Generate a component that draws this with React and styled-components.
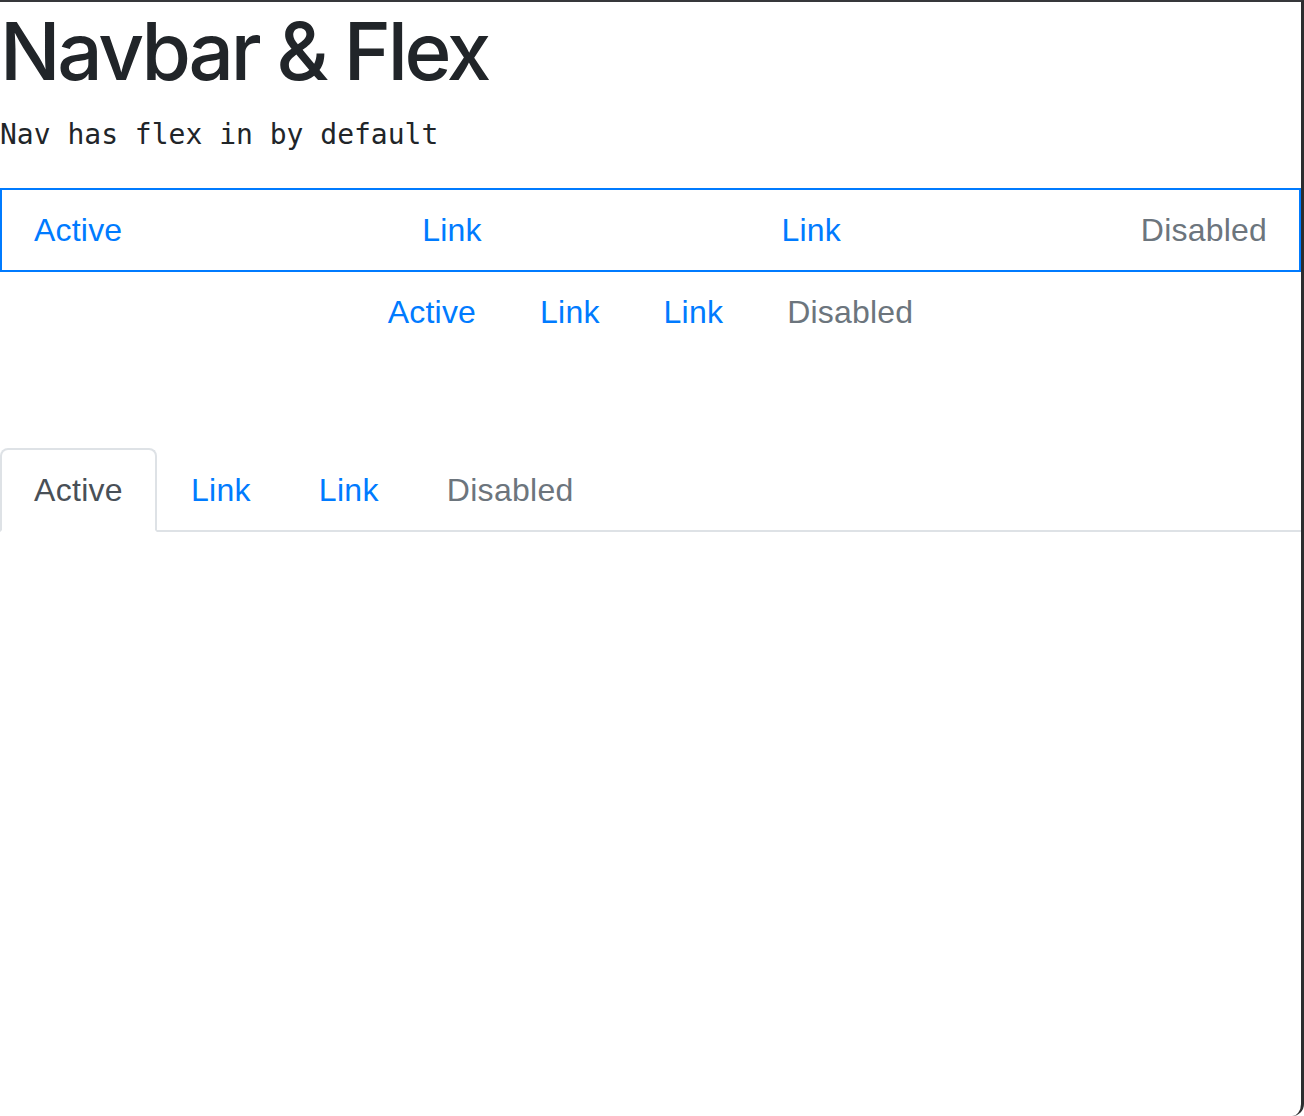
import React from 'react';
import styled, { createGlobalStyle, css } from 'styled-components';

const GlobalStyle = createGlobalStyle`
  html, body {
    margin: 0;
    padding: 0;
    background: #ffffff;
  }
  body {
    font-family: "Liberation Sans", Arial, sans-serif;
    color: #212529;
  }
  * {
    box-sizing: border-box;
  }
`;

const Window = styled.div`
  width: 1304px;
  min-height: 1116px;
  border-top: 2px solid #36383b;
  border-right: 3px solid #2c2d2f;
  border-bottom-right-radius: 12px;
  background: #ffffff;
  overflow: hidden;
`;

const Title = styled.h1`
  margin: 0 0 16px;
  padding-top: 2px;
  font-family: Inter, "Liberation Sans", sans-serif;
  font-size: 80px;
  line-height: 94px;
  font-weight: 500;
  letter-spacing: -3.2px;
  color: #212529;
`;

const Note = styled.p`
  margin: 0 0 32px;
  font-family: "DejaVu Sans Mono", "Liberation Mono", monospace;
  font-size: 28px;
  line-height: 42px;
  color: #212529;
`;

const Nav = styled.nav`
  display: flex;
  flex-wrap: wrap;
  justify-content: ${(p) => p.$justify || 'flex-start'};
  ${(p) =>
    p.$outlined &&
    css`
      border: 2px solid #007bff;
    `}
`;

const NavLink = styled.a`
  display: block;
  padding: 16px 32px;
  font-size: 32px;
  line-height: 48px;
  letter-spacing: 0.2px;
  text-decoration: none;
  color: ${(p) => (p.$disabled ? '#6c757d' : '#007bff')};
  cursor: ${(p) => (p.$disabled ? 'default' : 'pointer')};
`;

const Tabs = styled.nav`
  display: flex;
  margin-top: 96px;
  border-bottom: 2px solid #dee2e6;
`;

const Tab = styled.a`
  display: block;
  margin-bottom: -2px;
  padding: 16px 32px;
  font-size: 32px;
  line-height: 48px;
  letter-spacing: 0.3px;
  text-decoration: none;
  border: 2px solid transparent;
  border-top-left-radius: 8px;
  border-top-right-radius: 8px;
  color: ${(p) => (p.$active ? '#495057' : p.$disabled ? '#6c757d' : '#007bff')};
  ${(p) =>
    p.$active &&
    css`
      background: #ffffff;
      border-color: #dee2e6 #dee2e6 #ffffff;
    `}
`;

const items = [
  { label: 'Active' },
  { label: 'Link' },
  { label: 'Link' },
  { label: 'Disabled', disabled: true },
];

export default function App() {
  return (
    <>
      <GlobalStyle />
      <Window>
        <Title>Navbar &amp; Flex</Title>
        <Note>Nav has flex in by default</Note>

        <Nav $outlined $justify="space-between">
          {items.map((item, i) => (
            <NavLink key={i} $disabled={item.disabled}>
              {item.label}
            </NavLink>
          ))}
        </Nav>

        <Nav $justify="center">
          {items.map((item, i) => (
            <NavLink key={i} $disabled={item.disabled}>
              {item.label}
            </NavLink>
          ))}
        </Nav>

        <Tabs>
          {items.map((item, i) => (
            <Tab key={i} $active={i === 0} $disabled={item.disabled}>
              {item.label}
            </Tab>
          ))}
        </Tabs>
      </Window>
    </>
  );
}
